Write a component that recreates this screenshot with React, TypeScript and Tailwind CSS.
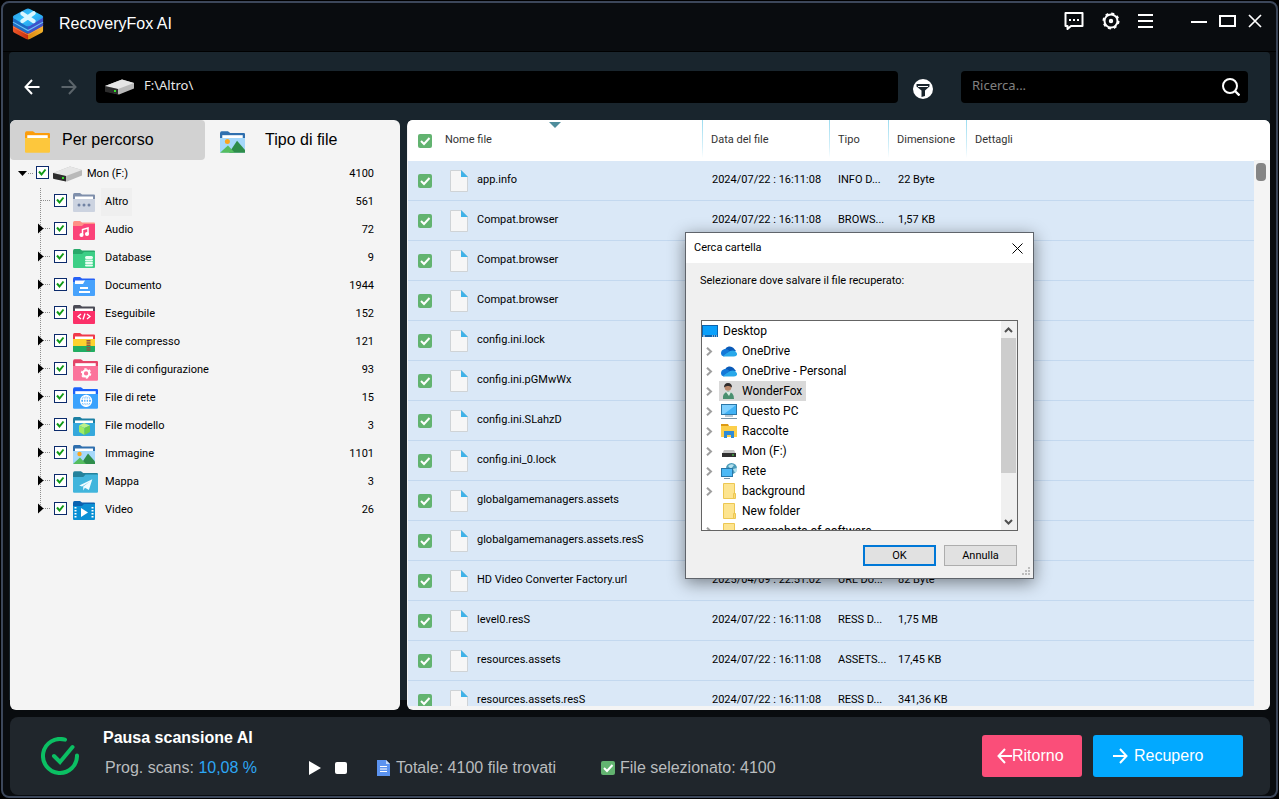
import type { ReactNode } from 'react';

type FolderKind =
  | 'other'
  | 'audio'
  | 'database'
  | 'document'
  | 'code'
  | 'archive'
  | 'config'
  | 'network'
  | 'model'
  | 'image'
  | 'map'
  | 'video'
  | 'plain';

type TreeItem = { name: string; count: number; kind: FolderKind; selected?: boolean };
type FileRow = { name: string; date: string; type: string; size: string };
type PlaceKind = 'onedrive' | 'user' | 'pc' | 'libraries' | 'drive' | 'network' | 'folder';
type Place = { name: string; kind: PlaceKind; leaf?: boolean; selected?: boolean };

const tree: TreeItem[] = [
  { name: 'Altro', count: 561, kind: 'other', selected: true },
  { name: 'Audio', count: 72, kind: 'audio' },
  { name: 'Database', count: 9, kind: 'database' },
  { name: 'Documento', count: 1944, kind: 'document' },
  { name: 'Eseguibile', count: 152, kind: 'code' },
  { name: 'File compresso', count: 121, kind: 'archive' },
  { name: 'File di configurazione', count: 93, kind: 'config' },
  { name: 'File di rete', count: 15, kind: 'network' },
  { name: 'File modello', count: 3, kind: 'model' },
  { name: 'Immagine', count: 1101, kind: 'image' },
  { name: 'Mappa', count: 3, kind: 'map' },
  { name: 'Video', count: 26, kind: 'video' },
];

const scanDate = '2024/07/22 : 16:11:08';

const files: FileRow[] = [
  { name: 'app.info', date: scanDate, type: 'INFO D...', size: '22 Byte' },
  { name: 'Compat.browser', date: scanDate, type: 'BROWS...', size: '1,57 KB' },
  { name: 'Compat.browser', date: scanDate, type: 'BROWS...', size: '1,57 KB' },
  { name: 'Compat.browser', date: scanDate, type: 'BROWS...', size: '1,57 KB' },
  { name: 'config.ini.lock', date: scanDate, type: 'LOCK D...', size: '0 Byte' },
  { name: 'config.ini.pGMwWx', date: scanDate, type: 'PGMW...', size: '1,02 KB' },
  { name: 'config.ini.SLahzD', date: scanDate, type: 'SLAHZ...', size: '1,02 KB' },
  { name: 'config.ini_0.lock', date: scanDate, type: 'LOCK D...', size: '0 Byte' },
  { name: 'globalgamemanagers.assets', date: scanDate, type: 'ASSETS...', size: '38 KB' },
  { name: 'globalgamemanagers.assets.resS', date: scanDate, type: 'RESS D...', size: '24 KB' },
  { name: 'HD Video Converter Factory.url', date: '2025/04/09 : 22:51:02', type: 'URL Do...', size: '82 Byte' },
  { name: 'level0.resS', date: scanDate, type: 'RESS D...', size: '1,75 MB' },
  { name: 'resources.assets', date: scanDate, type: 'ASSETS...', size: '17,45 KB' },
  { name: 'resources.assets.resS', date: scanDate, type: 'RESS D...', size: '341,36 KB' },
];

const places: Place[] = [
  { name: 'OneDrive', kind: 'onedrive' },
  { name: 'OneDrive - Personal', kind: 'onedrive' },
  { name: 'WonderFox', kind: 'user', selected: true },
  { name: 'Questo PC', kind: 'pc' },
  { name: 'Raccolte', kind: 'libraries' },
  { name: 'Mon (F:)', kind: 'drive' },
  { name: 'Rete', kind: 'network' },
  { name: 'background', kind: 'folder' },
  { name: 'New folder', kind: 'folder', leaf: true },
  { name: 'screenshots of software', kind: 'folder' },
];

function Logo() {
  return (
    <svg width="32" height="32" viewBox="0 0 34 34" aria-hidden="true">
      <defs>
        <linearGradient id="logoTop" x1="0" y1="0" x2="1" y2="1">
          <stop offset="0" stopColor="#2f8fe0" />
          <stop offset="0.5" stopColor="#2ec6fd" />
          <stop offset="1" stopColor="#2a7fe0" />
        </linearGradient>
        <linearGradient id="logoBase" x1="0" y1="0" x2="1" y2="0">
          <stop offset="0" stopColor="#f0592a" />
          <stop offset="0.5" stopColor="#c42f0c" />
          <stop offset="0.51" stopColor="#d9870f" />
          <stop offset="1" stopColor="#f3b32c" />
        </linearGradient>
      </defs>
      <path d="M1 17v7q0 1.500 1 2l13 7q2 1 4 0l13-7q1-.5 1-2v-7L17 24z" fill="url(#logoBase)" />
      <path d="M1 20l16 8.500L33 20" stroke="#ff9a6b" strokeOpacity="0.6" strokeWidth="1" fill="none" />
      <path d="M1 9v9q0 1 1 1.500l13 7q2 1 4 0l13-7q1-.5 1-1.500V9L17 19z" fill="#1b6bc4" />
      <path d="M17 19l16-10v9q0 1-1 1.500l-13 7q-1 .5-2 .5z" fill="#3f52c9" />
      <path d="M1 15l16 9 16-9" stroke="#6cc4f5" strokeWidth="1.200" fill="none" />
      <path d="M15 1q2-1 4 0l13 7q2 1.500 0 3L19 19q-2 1-4 0L2 11q-2-1.500 0-3z" fill="url(#logoTop)" />
      <path d="M11 6l12 8M23 5.500L11 14" stroke="#d9f6ff" strokeWidth="4.400" strokeLinecap="round" />
    </svg>
  );
}

function DriveIcon({ className = '' }: { className?: string }) {
  return (
    <svg className={className} width="30" height="16" viewBox="0 0 30 16" aria-hidden="true">
      <path d="M0 7L17 .5 29 4v5.500L14 15.500 0 12z" fill="#b9b9b9" />
      <path d="M0 7L17 .5 29 4 13 10z" fill="#e6e6e6" />
      <path d="M0 7l13 3v5.500L1 13Q0 13 0 12z" fill="#2d2d2d" />
      <rect x="9" y="11" width="2" height="2" fill="#35e02c" />
    </svg>
  );
}

const folderColors: Record<FolderKind, [string, string]> = {
  other: ['#7f8fab', '#ccd3e0'],
  audio: ['#ff8f86', '#fb4379'],
  database: ['#27a96a', '#3ccf86'],
  document: ['#2560f5', '#47a2fc'],
  code: ['#4a4a55', '#fb3068'],
  archive: ['#f0394a', '#fdd22e'],
  config: ['#e44468', '#fb739b'],
  network: ['#1c62fb', '#3aa2fd'],
  model: ['#1c7fa3', '#35a8dc'],
  image: ['#2f6fae', '#a5d8fb'],
  map: ['#23829c', '#41b5dc'],
  video: ['#0a62b0', '#0b90d4'],
  plain: ['#fb9d0b', '#fdc73c'],
};

const folderGlyphs: Record<FolderKind, ReactNode> = {
  other: (
    <g fill="#7182a3">
      <circle cx="6" cy="12" r="1.500" />
      <circle cx="11" cy="12" r="1.500" />
      <circle cx="16" cy="12" r="1.500" />
    </g>
  ),
  audio: (
    <g stroke="#fff" strokeWidth="1.500" fill="none">
      <path d="M9.500 14V8.500L15 7v6" />
      <circle cx="8.500" cy="14" r="1.300" fill="#fff" />
      <circle cx="14" cy="13" r="1.300" fill="#fff" />
    </g>
  ),
  database: (
    <g fill="#e9fff3">
      <rect x="12" y="7" width="8" height="3" rx="1.500" />
      <rect x="12" y="10.500" width="8" height="2" rx="1" />
      <rect x="12" y="13" width="8" height="2" rx="1" />
      <rect x="12" y="15.500" width="8" height="2" rx="1" />
    </g>
  ),
  document: (
    <>
      <path d="M2 3.500h10l-2 3.500H2z" fill="#fff" />
      <path d="M7 11h8M6 15h11" stroke="#fff" strokeWidth="1.800" />
    </>
  ),
  code: <path d="M8 9l-3 2.500L8 14M14 9l3 2.500-3 2.500M12 8.500l-2 6" stroke="#fff" strokeWidth="1.300" fill="none" />,
  archive: (
    <>
      <path d="M0 13h22v5q0 1-1 1H1q-1 0-1-1z" fill="#21ad63" />
      <path d="M15.500 7v11" stroke="#935244" strokeWidth="4" strokeDasharray="1.500 .8" />
    </>
  ),
  config: (
    <g stroke="#fff" fill="none">
      <circle cx="11.500" cy="12.500" r="2.800" strokeWidth="1.800" />
      <circle cx="11.500" cy="12.500" r="4" strokeWidth="1.200" strokeDasharray="2.100 2.089" />
    </g>
  ),
  network: (
    <g stroke="#fff" strokeWidth="1.200" fill="none">
      <circle cx="11.500" cy="12" r="4.800" />
      <ellipse cx="11.500" cy="12" rx="2.200" ry="4.800" />
      <path d="M11.500 7v10M7 10.500h9M7 13.500h9" />
    </g>
  ),
  model: (
    <>
      <path d="M6 8.500L11 6l6 2.500-5.500 2.500z" fill="#bdf18a" />
      <path d="M6 8.500l5.500 2.500v7L6 15z" fill="#a0ec62" />
      <path d="M17 8.500L11.500 11v7l5.500-3z" fill="#6bcf4b" />
    </>
  ),
  image: (
    <>
      <circle cx="6.500" cy="9" r="2.200" fill="#fba51e" />
      <path d="M8 19l7-10.500 7 8V19z" fill="#2e8d4a" />
      <path d="M0 19l7-6.500 6 6.500z" fill="#55bd5f" />
    </>
  ),
  map: <path d="M5.500 12.500L17 7l-3 9.500-3.500-2-1.500 2.500v-3.500L15 9l-7 4.500z" fill="#f0fbff" />,
  video: (
    <>
      <path d="M8 7l7 4.500L8 16z" fill="#fff" />
      <path d="M2.500 6v12M19.500 6v12" stroke="#fff" strokeWidth="2" strokeDasharray="1.500 1.500" />
    </>
  ),
  plain: null,
};

const largeFolders: FolderKind[] = ['config', 'network', 'map'];
const slipFolders: FolderKind[] = ['other', 'code', 'archive', 'config', 'network', 'model', 'image', 'plain'];

function FolderIcon({ kind, large = false }: { kind: FolderKind; large?: boolean }) {
  const [back, front] = folderColors[kind];
  const big = large || largeFolders.includes(kind);
  const slip = slipFolders.includes(kind);
  return (
    <svg width={big ? 25 : 22} height={big ? 22 : 19} viewBox="0 0 22 19" aria-hidden="true">
      <path d="M0 2q0-2 1.500-2H7l2 1.500h12q1 0 1 1V12H0z" fill={back} />
      {slip && <rect x="2" y="3.500" width="18" height="4" fill="#fff" />}
      <path d={slip ? 'M0 6h22v12q0 1-1 1H1q-1 0-1-1z' : 'M0 5h9l2-2h11v15q0 1-1 1H1q-1 0-1-1z'} fill={front} />
      {folderGlyphs[kind]}
    </svg>
  );
}

function FileIcon() {
  return (
    <svg width="18" height="22" viewBox="0 0 18 22" className="shrink-0" aria-hidden="true">
      <path d="M.5.5h11l6 6v15H.5z" fill="#f6f6f6" stroke="#cfd3d6" />
      <path d="M11 0l7 7h-7z" fill="#3fb2e8" />
    </svg>
  );
}

function GreenCheck({ label }: { label: string }) {
  return (
    <span className="grid shrink-0 place-items-center">
      <input
        type="checkbox"
        defaultChecked
        aria-label={label}
        className="col-start-1 row-start-1 size-[14px] appearance-none rounded-xs bg-[#62b370]"
      />
      <svg width="14" height="14" viewBox="0 0 14 14" className="pointer-events-none col-start-1 row-start-1" aria-hidden="true">
        <path d="M3 7l3 3 5.500-6" stroke="#fff" strokeWidth="2" fill="none" />
      </svg>
    </span>
  );
}

function TreeCheck({ label }: { label: string }) {
  return (
    <span className="mb-[3px] grid shrink-0 place-items-center">
      <input
        type="checkbox"
        defaultChecked
        aria-label={label}
        className="col-start-1 row-start-1 size-[13px] appearance-none border border-[#0b2a6b] bg-white"
      />
      <svg width="13" height="13" viewBox="0 0 13 13" className="pointer-events-none col-start-1 row-start-1" aria-hidden="true">
        <path d="M3 5.500l2.500 3 4-5" stroke="#119a17" strokeWidth="2" fill="none" />
      </svg>
    </span>
  );
}

function Branch({ first, last }: { first: boolean; last: boolean }) {
  return (
    <svg width="16" height="28" viewBox="0 0 16 28" className="shrink-0" aria-hidden="true">
      <path d={last ? 'M2.500 0v12' : 'M2.500 0v28'} stroke="#8f8f8f" strokeDasharray="1 1" />
      <path d="M3 12.500h9" stroke="#8f8f8f" strokeDasharray="1 1" />
      {!first && <path d="M0 7.500l5.500 5-5.500 5z" fill="#000" />}
    </svg>
  );
}

function TitleBar() {
  return (
    <header className="flex h-[49px] shrink-0 items-start border-b border-black pl-[9px] pr-3.5">
      <div className="flex items-center gap-[15px] pt-[5px]">
        <Logo />
        <h1 className="text-base">RecoveryFox AI</h1>
      </div>
      <div className="ml-auto flex h-[35px] items-center gap-[38px] text-white">
        <div className="flex items-center gap-[18px]">
          <button aria-label="Feedback">
            <svg width="20" height="18" viewBox="0 0 20 18" fill="none" stroke="currentColor" strokeWidth="2">
              <path d="M1.500 1h17v13H7l-3.500 3v-3h-2z" strokeLinejoin="round" />
              <path d="M5 8h2M9 8h2M13 8h2" />
            </svg>
          </button>
          <button aria-label="Impostazioni">
            <svg width="18" height="18" viewBox="0 0 18 18" fill="none" stroke="currentColor">
              <circle cx="9" cy="9" r="6.500" strokeWidth="2" />
              <circle cx="9" cy="9" r="7.600" strokeWidth="1.800" strokeDasharray="3 2.970" />
              <circle cx="9" cy="9" r="1.200" strokeWidth="2" />
            </svg>
          </button>
          <button aria-label="Menu">
            <svg width="15" height="14" viewBox="0 0 15 14" stroke="currentColor" strokeWidth="2">
              <path d="M0 1h15M0 7h15M0 13h15" />
            </svg>
          </button>
        </div>
        <div className="flex items-center gap-3">
          <button aria-label="Riduci">
            <svg width="16" height="14" viewBox="0 0 16 14" stroke="currentColor" strokeWidth="2">
              <path d="M0 8h16" />
            </svg>
          </button>
          <button aria-label="Ingrandisci">
            <svg width="17" height="12" viewBox="0 0 17 12" fill="none" stroke="currentColor" strokeWidth="2">
              <rect x="1" y="1" width="15" height="10" />
            </svg>
          </button>
          <button aria-label="Chiudi">
            <svg width="14" height="14" viewBox="0 0 14 14" stroke="currentColor" strokeWidth="1.700">
              <path d="M1 1l12 12M13 1L1 13" />
            </svg>
          </button>
        </div>
      </div>
    </header>
  );
}

function Toolbar() {
  return (
    <div className="flex h-[68px] shrink-0 items-center pl-[11px] pr-[22px] pt-0.5">
      <button aria-label="Indietro" className="grid size-6 place-items-center">
        <svg width="16" height="16" viewBox="0 0 16 16" fill="none" stroke="#fff" strokeWidth="2">
          <path d="M15.500 8H1.500M8 1L1.500 8 8 15" />
        </svg>
      </button>
      <button aria-label="Avanti" className="ml-[13px] grid size-6 place-items-center">
        <svg width="16" height="16" viewBox="0 0 16 16" fill="none" stroke="#5b646a" strokeWidth="2">
          <path d="M.5 8h14M8 1l6.500 7L8 15" />
        </svg>
      </button>
      <label className="ml-[15px] flex h-8 flex-1 items-center gap-[9px] rounded-sm bg-black pl-[9px]">
        <DriveIcon />
        <input
          aria-label="Percorso"
          defaultValue="F:\Altro\"
          className="mb-0.5 min-w-0 flex-1 bg-transparent font-['Noto_Sans',sans-serif] text-[13px] text-[#e8e8e8] outline-none"
        />
      </label>
      <button aria-label="Filtro" className="ml-2.5 grid size-[29px] place-items-center pt-1">
        <svg width="20" height="20" viewBox="0 0 20 20">
          <circle cx="10" cy="10" r="10" fill="#fff" />
          <path d="M3.500 5h13v2.500l-4.500 4V17l-3.500 1v-6.500l-5-4z" fill="#19242c" />
          <path d="M5 7.500h10" stroke="#fff" />
        </svg>
      </button>
      <label className="ml-6 flex h-8 w-[287px] items-center rounded-sm bg-black pl-[11px] pr-2">
        <input
          type="text"
          aria-label="Ricerca"
          placeholder="Ricerca..."
          className="mb-0.5 min-w-0 flex-1 bg-transparent font-['Noto_Sans',sans-serif] text-[13px] outline-none placeholder:text-[#808080]"
        />
        <svg width="18" height="18" viewBox="0 0 18 18" fill="none" stroke="#fff" strokeWidth="2" aria-hidden="true">
          <circle cx="8" cy="8" r="7" />
          <path d="M13 13l4.500 4.500" strokeWidth="2.400" />
        </svg>
      </label>
    </div>
  );
}

function TreePanel() {
  return (
    <aside className="flex w-[390px] shrink-0 flex-col overflow-hidden rounded-md bg-[#f4f4f4] text-black">
      <div className="grid h-10 shrink-0 grid-cols-2">
        <button className="flex items-center gap-3 rounded bg-[#d2d2d2] pl-[15px] text-base">
          <span className="mt-1">
            <FolderIcon kind="plain" large />
          </span>
          Per percorso
        </button>
        <button className="flex items-center gap-5 pl-[15px] text-base">
          <span className="mt-1">
            <FolderIcon kind="image" large />
          </span>
          Tipo di file
        </button>
      </div>
      <div className="font-[Roboto,sans-serif] text-[11px]">
        <div className="flex h-7 items-center pl-2 pr-[26px]">
          <svg width="18" height="14" viewBox="0 0 18 14" className="mb-0.5" aria-hidden="true">
            <path d="M0 5h9l-4.500 5z" fill="#000" />
            <path d="M10 7.500h6" stroke="#8f8f8f" strokeDasharray="1 1" />
          </svg>
          <TreeCheck label="Mon (F:)" />
          <DriveIcon className="ml-1" />
          <span className="ml-1">Mon (F:)</span>
          <span className="ml-auto">4100</span>
        </div>
        <ul>
          {tree.map((item, i) => (
            <li key={item.name} className="flex h-7 items-center pl-7 pr-[26px]">
              <Branch first={i === 0} last={i === tree.length - 1} />
              <TreeCheck label={item.name} />
              <span className="ml-1.5 flex w-7 items-center">
                <FolderIcon kind={item.kind} />
              </span>
              <span className={`flex h-full items-center px-1 ${item.selected ? 'bg-[#efefef]' : ''}`}>{item.name}</span>
              <span className="ml-auto">{item.count}</span>
            </li>
          ))}
        </ul>
      </div>
    </aside>
  );
}

const headCell =
  'bg-[linear-gradient(to_bottom,#9bdcf0,#d5f0f9_70%,#ffffff)] bg-[length:1px_38px] bg-no-repeat pl-[9px] text-left font-normal';

function FilePanel() {
  return (
    <section className="flex min-w-0 flex-1 overflow-hidden rounded-md bg-[#f4f4f4] pb-1 pl-px">
      <div className="min-w-0 flex-1 overflow-hidden">
        <table className="w-full table-fixed border-separate border-spacing-0 font-[Roboto,sans-serif] text-[11px] text-black">
          <colgroup>
            <col className="w-[294px]" />
            <col className="w-[127px]" />
            <col className="w-[59px]" />
            <col className="w-[78px]" />
            <col />
          </colgroup>
          <thead>
            <tr className="h-[41px] bg-white text-[#333]">
              <th className="relative pl-2.5 text-left font-normal">
                <svg width="12" height="6" viewBox="0 0 12 6" className="absolute left-1/2 top-0.5 -translate-x-1/2" aria-hidden="true">
                  <path d="M0 0h12L6 6z" fill="#4f8d9c" />
                </svg>
                <span className="flex items-center gap-[13px]">
                  <GreenCheck label="Seleziona tutto" />
                  Nome file
                </span>
              </th>
              <th className={headCell}>Data del file</th>
              <th className={headCell}>Tipo</th>
              <th className={headCell}>Dimensione</th>
              <th className={headCell}>Dettagli</th>
            </tr>
          </thead>
          <tbody>
            {files.map((file, i) => (
              <tr key={i} className="h-10 bg-[#dae8f7] *:border-b *:border-[#c3d8ef]">
                <td className="pl-2.5">
                  <span className="flex items-center">
                    <GreenCheck label={file.name} />
                    <span className="ml-[18px] mr-[9px]">
                      <FileIcon />
                    </span>
                    {file.name}
                  </span>
                </td>
                <td className="whitespace-nowrap pl-2.5">{file.date}</td>
                <td className="whitespace-nowrap pl-[9px]">{file.type}</td>
                <td className="pl-2.5">{file.size}</td>
                <td />
              </tr>
            ))}
          </tbody>
        </table>
      </div>
      <div className="flex w-4 shrink-0 flex-col">
        <div className="h-10 bg-white" />
        <div className="ml-0.5 mt-[3px] h-[18px] w-2.5 rounded bg-[#858585]" />
      </div>
    </section>
  );
}

function StatusBar() {
  return (
    <footer className="mb-px ml-[7px] mr-1.5 mt-[7px] flex h-[78px] shrink-0 items-center rounded-lg bg-[#20262c] pl-[31px] pr-[27px]">
      <svg width="38" height="38" viewBox="0 0 38 38" fill="none" stroke="#0bbf63" strokeWidth="4" strokeLinecap="round" aria-hidden="true">
        <path d="M24 2.700A17 17 0 1 0 36 18.500" />
        <path d="M13 19l6 6L31.500 10" />
      </svg>
      <div className="ml-6 flex flex-1 flex-col pb-1">
        <div className="flex h-7 items-center text-base font-bold text-white">Pausa scansione AI</div>
        <div className="flex h-8 items-center pl-0.5 text-base text-[#b9bcbe]">
          <div className="w-[203px]">
            Prog. scans: <span className="text-[#2da7f5]">10,08 %</span>
          </div>
          <button aria-label="Riprendi">
            <svg width="14" height="14" viewBox="0 0 14 14">
              <path d="M1 0l12 7-12 7z" fill="#fff" />
            </svg>
          </button>
          <button aria-label="Ferma" className="ml-[13px] size-3 rounded-xs bg-white" />
          <div className="ml-[30px] flex w-56 items-center gap-1.5">
            <svg width="13" height="16" viewBox="0 0 13 16" aria-hidden="true">
              <path d="M0 0h9l4 4v12H0z" fill="#5b93f0" />
              <path d="M9 0l4 4H9z" fill="#c5dafa" />
              <path d="M3 6.500h7M3 9h7M3 11.500h7" stroke="#fff" />
            </svg>
            Totale: 4100 file trovati
          </div>
          <label className="flex items-center gap-[5px]">
            <GreenCheck label="File selezionato" />
            File selezionato: 4100
          </label>
        </div>
      </div>
      <div className="flex gap-[11px] text-base text-white">
        <button className="flex h-[42px] w-[100px] items-center rounded-[3px] bg-[#fa4e79] pl-[15px]">
          <svg width="15" height="16" viewBox="0 0 15 16" fill="none" stroke="#fff" strokeWidth="2">
            <path d="M15 8H1.500M8 1L1.500 8 8 15" />
          </svg>
          Ritorno
        </button>
        <button className="flex h-[42px] w-[150px] items-center gap-1.5 rounded-[3px] bg-[#02a9ff] pl-5">
          <svg width="15" height="16" viewBox="0 0 15 16" fill="none" stroke="#fff" strokeWidth="2">
            <path d="M0 8h13.500M7 1l6.500 7L7 15" />
          </svg>
          Recupero
        </button>
      </div>
    </footer>
  );
}

const placeIcons: Record<PlaceKind, ReactNode> = {
  onedrive: (
    <>
      <path d="M4 6.500A5 4.500 0 0 1 12.500 5L15 8 3 11z" fill="#0a5ab8" />
      <path d="M3.500 6q3-.5 5 2L3 13.500Q0 13 0 10t3.500-4z" fill="#1478d8" />
      <path d="M2 13l7-5q5-2 7 2.500.5 3-3 3H4q-1.500 0-2-.5z" fill="#29a8ea" />
    </>
  ),
  user: (
    <>
      <circle cx="7" cy="4.500" r="3.300" fill="#b9876a" />
      <path d="M3 4.500Q3 0 7 0t4 4.500Q9 2.500 7 3 5 2.500 3 4.500z" fill="#2f2b2b" />
      <path d="M2 16q-1-6 5-7.500 6 .5 6 7.500z" fill="#4a9070" />
      <path d="M5 9l3 4 2-4z" fill="#d9ece2" />
    </>
  ),
  pc: (
    <>
      <rect x=".5" y="1.500" width="15" height="10" fill="#41b2f5" stroke="#2a77a8" />
      <path d="M1 2h14L3 11H1z" fill="#7fd0ff" />
      <path d="M4 13h8" stroke="#7693a6" />
      <path d="M0 15.500h16" stroke="#7693a6" />
    </>
  ),
  libraries: (
    <>
      <path d="M0 1h7l1 2H0z" fill="#dd9a14" />
      <path d="M0 3h16v11H0z" fill="#fccf4b" />
      <path d="M3 15V8h10v7h-3v-3H6v3z" fill="#2f8bd6" />
    </>
  ),
  drive: (
    <>
      <path d="M3 7h10l1.500 3h-13z" fill="#c5c5c5" />
      <rect x="1" y="10" width="14" height="4" fill="#303030" />
      <rect x="11" y="11.500" width="2" height="1" fill="#4be04b" />
    </>
  ),
  network: (
    <>
      <circle cx="10.500" cy="5.500" r="5.500" fill="#4b9cba" />
      <path d="M7 3q3-3 6-1l-3 4zM12 6l4-1v3l-2 2z" fill="#b5e1ee" />
      <rect x=".5" y="5.500" width="11" height="8" fill="#4db9f5" stroke="#2a77a8" />
      <path d="M3 15.500h6" stroke="#7693a6" />
    </>
  ),
  folder: (
    <>
      <path d="M2.500.5h11v15h-11z" fill="#fde48f" stroke="#ecc752" />
      <path d="M12.500 10.500h2v5h-2z" fill="#fbd976" stroke="#ecc752" />
    </>
  ),
};

function FolderDialog() {
  return (
    <div
      role="dialog"
      aria-label="Cerca cartella"
      className="absolute left-[685px] top-[232px] flex h-[347px] w-[349px] flex-col border border-[#5f646b] bg-[#f0f0f0] font-[Roboto,sans-serif] text-black shadow-[0_4px_16px_rgba(0,0,0,0.45)]"
    >
      <div className="flex h-[30px] shrink-0 items-center justify-between bg-white pl-2 pr-2.5">
        <h2 className="text-[11px]">Cerca cartella</h2>
        <button aria-label="Chiudi">
          <svg width="11" height="11" viewBox="0 0 11 11" stroke="#000">
            <path d="M.5.5l10 10M10.500.5l-10 10" />
          </svg>
        </button>
      </div>
      <p className="h-[57px] shrink-0 pl-3.5 pt-2.5 text-[11px] leading-4">Selezionare dove salvare il file recuperato:</p>
      <div className="mx-[15px] flex h-[211px] shrink-0 border border-[#646464] bg-white">
        <ul className="min-w-0 flex-1 overflow-hidden text-xs leading-5">
          <li className="flex h-5 items-center gap-[5px]">
            <svg width="16" height="12" viewBox="0 0 16 12" aria-hidden="true">
              <rect width="16" height="12" fill="#0c63ad" />
              <rect x="1" y="1" width="14" height="9" fill="#0aa0fb" />
              <path d="M1 11h2M10 11h1M12 11h1M14 11h1" stroke="#fff" />
            </svg>
            Desktop
          </li>
          {places.map((place) => (
            <li key={place.name} className="flex h-5 items-center pl-1">
              <svg width="7" height="9" viewBox="0 0 7 9" fill="none" stroke="#9f9f9f" strokeWidth="2" className="mr-1.5" aria-hidden="true">
                {!place.leaf && <path d="M1 .7l4 3.800-4 3.800" />}
              </svg>
              <span className={`flex h-5 items-center gap-[5px] whitespace-nowrap px-0.5 pr-1 ${place.selected ? 'bg-[#d9d9d9]' : ''}`}>
                <svg width="16" height="16" viewBox="0 0 16 16" className="shrink-0" aria-hidden="true">
                  {placeIcons[place.kind]}
                </svg>
                {place.name}
              </span>
            </li>
          ))}
        </ul>
        <div className="flex w-4 shrink-0 flex-col bg-[#f0f0f0] pr-px">
          <svg width="15" height="17" viewBox="0 0 15 17" fill="none" stroke="#505050" strokeWidth="2" aria-hidden="true">
            <path d="M4 11l3.500-3.500L11 11" />
          </svg>
          <div className="h-[135px] bg-[#cdcdcd]" />
          <svg width="15" height="17" viewBox="0 0 15 17" fill="none" stroke="#505050" strokeWidth="2" className="mt-auto" aria-hidden="true">
            <path d="M4 7l3.500 3.500L11 7" />
          </svg>
        </div>
      </div>
      <div className="mt-3.5 flex justify-end gap-2 pr-4 text-[11px]">
        <button className="h-[21px] w-[73px] border-2 border-[#0078d7] bg-[#e1e1e1] leading-4">OK</button>
        <button className="h-[21px] w-[73px] border border-[#adadad] bg-[#e1e1e1] leading-4">Annulla</button>
      </div>
      <svg width="9" height="9" viewBox="0 0 9 9" fill="#bdbdbd" className="absolute bottom-0.5 right-0.5" aria-hidden="true">
        <path d="M6 0h2v2H6zM3 3h2v2H3zM6 3h2v2H6zM0 6h2v2H0zM3 6h2v2H3zM6 6h2v2H6z" />
      </svg>
    </div>
  );
}

export default function App() {
  return (
    <div className="relative h-screen bg-black p-px font-['Liberation_Sans',sans-serif]">
      <div className="flex h-full flex-col rounded-lg border-2 border-[#3c475a] bg-[#090c0f] text-white">
        <TitleBar />
        <main className="mx-1.5 flex min-h-0 flex-1 flex-col rounded-t-sm bg-[linear-gradient(to_top,#090c0f_10px,#19252d_10px)]">
          <Toolbar />
          <div className="flex min-h-0 flex-1 gap-[7px] pl-px">
            <TreePanel />
            <FilePanel />
          </div>
        </main>
        <StatusBar />
      </div>
      <FolderDialog />
    </div>
  );
}
